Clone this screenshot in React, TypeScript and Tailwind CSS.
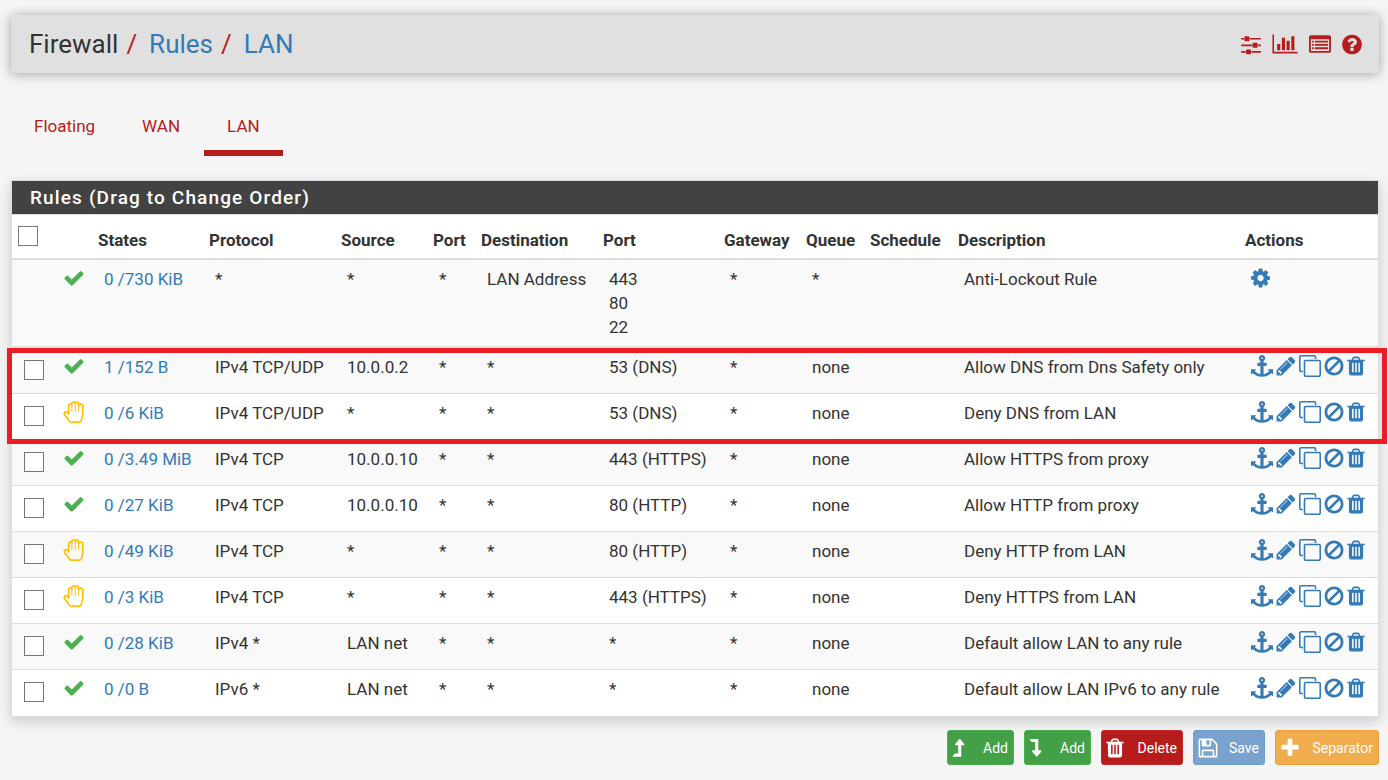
import type { ReactNode } from 'react'

type Status = 'pass' | 'block'

interface Rule {
  status: Status
  states: string
  protocol: string
  source: string
  port: string
  description: string
}

const RULES: Rule[] = [
  { status: 'pass',  states: '1 /152 B',    protocol: 'IPv4 TCP/UDP', source: '10.0.0.2',  port: '53 (DNS)',    description: 'Allow DNS from Dns Safety only' },
  { status: 'block', states: '0 /6 KiB',    protocol: 'IPv4 TCP/UDP', source: '*',         port: '53 (DNS)',    description: 'Deny DNS from LAN' },
  { status: 'pass',  states: '0 /3.49 MiB', protocol: 'IPv4 TCP',     source: '10.0.0.10', port: '443 (HTTPS)', description: 'Allow HTTPS from proxy' },
  { status: 'pass',  states: '0 /27 KiB',   protocol: 'IPv4 TCP',     source: '10.0.0.10', port: '80 (HTTP)',   description: 'Allow HTTP from proxy' },
  { status: 'block', states: '0 /49 KiB',   protocol: 'IPv4 TCP',     source: '*',         port: '80 (HTTP)',   description: 'Deny HTTP from LAN' },
  { status: 'block', states: '0 /3 KiB',    protocol: 'IPv4 TCP',     source: '*',         port: '443 (HTTPS)', description: 'Deny HTTPS from LAN' },
  { status: 'pass',  states: '0 /28 KiB',   protocol: 'IPv4 *',       source: 'LAN net',   port: '*',           description: 'Default allow LAN to any rule' },
  { status: 'pass',  states: '0 /0 B',      protocol: 'IPv6 *',       source: 'LAN net',   port: '*',           description: 'Default allow LAN IPv6 to any rule' },
]

const TABS = ['Floating', 'WAN', 'LAN']

const COLUMNS = ['States', 'Protocol', 'Source', 'Port', 'Destination', 'Port', 'Gateway', 'Queue', 'Schedule', 'Description', 'Actions']

// 1792-unit icon outlines
const PATHS = {
  check: 'M1671 566q0 40-28 68l-724 724-136 136q-28 28-68 28t-68-28l-136-136-362-362q-28-28-28-68t28-68l136-136q28-28 68-28t68 28l294 295 656-657q28-28 68-28t68 28l136 136q28 28 28 68z',
  cog: 'M1152 896q0-106-75-181t-181-75-181 75-75 181 75 181 181 75 181-75 75-181zm512-109v222q0 12-8 23t-20 13l-185 28q-19 54-39 91 35 50 107 138 10 12 10 25t-9 23q-27 37-99 108t-94 71q-12 0-26-9l-138-108q-44 23-91 38-16 136-29 186-7 28-36 28h-222q-14 0-24.5-8.5t-11.5-21.5l-28-184q-49-16-90-37l-141 107q-10 9-25 9-14 0-25-11-126-114-165-168-7-10-7-23 0-12 8-23 15-21 51-66.5t54-70.5q-27-50-41-99l-183-27q-13-2-21-12.5t-8-23.5v-222q0-12 8-23t19-13l186-28q14-46 39-92-40-57-107-138-10-12-10-24 0-10 9-23 26-36 98.5-107.5t94.5-71.5q13 0 26 10l138 107q44-23 91-38 16-136 29-186 7-28 36-28h222q14 0 24.5 8.5t11.5 21.5l28 184q49 16 90 37l142-107q9-9 24-9 13 0 25 10 129 119 165 170 7 8 7 22 0 12-8 23-15 21-51 66.5t-54 70.5q26 50 41 98l183 28q13 2 21 12.5t8 23.5z',
  anchor: 'M960 256q0-26-19-45t-45-19-45 19-19 45 19 45 45 19 45-19 19-45zm832 928v352q0 22-20 30-8 2-12 2-12 0-23-9l-93-93q-119 143-318.5 226.5t-429.5 83.5-429.5-83.5-318.5-226.5l-93 93q-9 9-23 9-4 0-12-2-20-8-20-30v-352q0-14 9-23t23-9h352q22 0 30 20 8 19-7 35l-100 100q67 91 189.5 153.5t271.5 82.5v-647h-192q-26 0-45-19t-19-45v-128q0-26 19-45t45-19h192v-163q-58-34-93-92.5t-35-128.5q0-106 75-181t181-75 181 75 75 181q0 70-35 128.5t-93 92.5v163h192q26 0 45 19t19 45v128q0 26-19 45t-45 19h-192v647q149-20 271.5-82.5t189.5-153.5l-100-100q-15-16-7-35 8-20 30-20h352q14 0 23 9t9 23z',
  pencil: 'M491 1536l91-91-235-235-91 91v107h128v128h107zm523-928q0-22-22-22-10 0-17 7l-542 542q-7 7-7 17 0 22 22 22 10 0 17-7l542-542q7-7 7-17zm-54-192l416 416-832 832h-416v-416zm683 96q0 53-37 90l-166 166-416-416 166-165q36-38 90-38 53 0 91 38l235 234q37 39 37 91z',
  clone: 'M1664 1632v-1088q0-13-9.5-22.5t-22.5-9.5h-1088q-13 0-22.5 9.5t-9.5 22.5v1088q0 13 9.5 22.5t22.5 9.5h1088q13 0 22.5-9.5t9.5-22.5zm128-1088v1088q0 66-47 113t-113 47h-1088q-66 0-113-47t-47-113v-1088q0-66 47-113t113-47h1088q66 0 113 47t47 113zm-384-384v160h-128v-160q0-13-9.5-22.5t-22.5-9.5h-1088q-13 0-22.5 9.5t-9.5 22.5v1088q0 13 9.5 22.5t22.5 9.5h160v128h-160q-66 0-113-47t-47-113v-1088q0-66 47-113t113-47h1088q66 0 113 47t47 113z',
  ban: 'M1440 893q0-161-87-295l-754 753q137 89 297 89 111 0 211.5-43.5t173.5-116.5 116-174.5 43-212.5zm-999 299l755-754q-135-91-300-91-148 0-273 73t-198 199-73 274q0 162 89 299zm1223-299q0 157-61 300t-163.5 246-245 164-298.5 61-298.5-61-245-164-163.5-246-61-300 61-299.5 163.5-245.5 245-164 298.5-61 298.5 61 245 164 163.5 245.5 61 299.5z',
  trash: 'M704 1376v-704q0-14-9-23t-23-9h-64q-14 0-23 9t-9 23v704q0 14 9 23t23 9h64q14 0 23-9t9-23zm256 0v-704q0-14-9-23t-23-9h-64q-14 0-23 9t-9 23v704q0 14 9 23t23 9h64q14 0 23-9t9-23zm256 0v-704q0-14-9-23t-23-9h-64q-14 0-23 9t-9 23v704q0 14 9 23t23 9h64q14 0 23-9t9-23zm-544-992h448l-48-117q-7-9-17-11h-317q-10 2-17 11zm928 32v64q0 14-9 23t-23 9h-96v948q0 83-47 143.5t-113 60.5h-832q-66 0-113-58.5t-47-141.5v-952h-96q-14 0-23-9t-9-23v-64q0-14 9-23t23-9h309l70-167q15-37 54-63t79-26h320q40 0 79 26t54 63l70 167h309q14 0 23 9t9 23z',
  save: 'M512 1536h768v-384h-768v384zm896 0h128v-896q0-14-10-38.5t-20-34.5l-281-281q-10-10-34-20t-39-10v416q0 40-28 68t-68 28h-576q-40 0-68-28t-28-68v-416h-128v1280h128v-416q0-40 28-68t68-28h832q40 0 68 28t28 68v416zm-384-928v-320q0-13-9.5-22.5t-22.5-9.5h-192q-13 0-22.5 9.5t-9.5 22.5v320q0 13 9.5 22.5t22.5 9.5h192q13 0 22.5-9.5t9.5-22.5zm640 32v928q0 40-28 68t-68 28h-1344q-40 0-68-28t-28-68v-1344q0-40 28-68t68-28h928q40 0 88 20t76 48l280 280q28 28 48 76t20 88z',
  plus: 'M1600 736v192q0 40-28 68t-68 28h-416v416q0 40-28 68t-68 28h-192q-40 0-68-28t-28-68v-416h-416q-40 0-68-28t-28-68v-192q0-40 28-68t68-28h416v-416q0-40 28-68t68-28h192q40 0 68 28t28 68v416h416q40 0 68 28t28 68z',
  sliders: 'M480 1408v128h-352v-128h352zm352-128q26 0 45 19t19 45v256q0 26-19 45t-45 19h-256q-26 0-45-19t-19-45v-256q0-26 19-45t45-19h256zm160-384v128h-864v-128h864zm-640-512v128h-224v-128h224zm1312 1024v128h-736v-128h736zm-960-1152q26 0 45 19t19 45v256q0 26-19 45t-45 19h-256q-26 0-45-19t-19-45v-256q0-26 19-45t45-19h256zm640 512q26 0 45 19t19 45v256q0 26-19 45t-45 19h-256q-26 0-45-19t-19-45v-256q0-26 19-45t45-19h256zm320 128v128h-224v-128h224zm0-512v128h-864v-128h864z',
  chart: 'M640 896v512h-256v-512h256zm384-512v1024h-256v-1024h256zm1024 1152v128h-2048v-1536h128v1408h1920zm-640-896v768h-256v-768h256zm384-384v1152h-256v-1152h256z',
  help: 'M1024 1376v-192q0-14-9-23t-23-9h-192q-14 0-23 9t-9 23v192q0 14 9 23t23 9h192q14 0 23-9t9-23zm256-672q0-88-55.5-163t-138.5-116-170-41q-243 0-371 213-15 24 8 42l132 100q7 6 19 6 16 0 25-12 53-68 86-92 34-24 86-24 48 0 85.5 26t37.5 59q0 38-20 61t-68 45q-63 28-115.5 86.5t-52.5 125.5v36q0 14 9 23t23 9h192q14 0 23-9t9-23q0-19 21.5-49.5t54.5-49.5q32-18 49-28.5t46-35 44.5-48 28-60.5 12.5-81zm384 192q0 209-103 385.5t-279.5 279.5-385.5 103-385.5-103-279.5-279.5-103-385.5 103-385.5 279.5-279.5 385.5-103 385.5 103 279.5 279.5 103 385.5z',
  list: 'M160 128h1600q66 0 113 47t47 113v1216q0 66-47 113t-113 47h-1600q-66 0-113-47t-47-113v-1216q0-66 47-113t113-47zM160 480v992q0 32 32 32h1536q32 0 32-32v-992zM272 608h150v160h-150zM512 608h1152v160h-1152zM272 896h150v160h-150zM512 896h1152v160h-1152zM272 1184h150v160h-150zM512 1184h1152v160h-1152z',
  up: 'M448 1600q-24 0-32-18t4-34l160-192q9-12 25-12h259v-672h-192q-40 0-58-37t9-68l320-384q18-22 49-22t49 22l320 384q27 32 9 69t-58 36h-192v896q0 32-32 32z',
  down: 'M448 160q-24 0-32 18t4 34l160 192q9 12 25 12h259v672h-192q-40 0-58 37t9 68l320 384q18 22 49 22t49-22l320-384q27-32 9-69t-58-36h-192v-896q0-32-32-32z',
}

function Icon({ name, viewBox = '0 0 1792 1792', className = 'size-[22px]' }: { name: keyof typeof PATHS; viewBox?: string; className?: string }) {
  return (
    <svg viewBox={viewBox} className={`block shrink-0 ${className}`} fill="currentColor" fillRule="evenodd" aria-hidden="true">
      <path d={PATHS[name]} />
    </svg>
  )
}

function HandIcon() {
  return (
    <svg viewBox="0 0 22 22" className="-ml-px block size-[22px] text-[#ffc107]" fill="none" stroke="currentColor" strokeWidth="1.7" strokeLinecap="round" strokeLinejoin="round" aria-hidden="true">
      <path d="M5.700 12.800V4.600a1.700 1.700 0 0 1 3.200-.8V2.700a1.700 1.700 0 0 1 3.400-.2a1.700 1.700 0 0 1 3.300 1v1.300a1.900 1.900 0 0 1 4.200.9v7.500c0 3-1.300 4.300-1.500 6.200-.1 1-.7 1.700-1.700 1.700H8.400c-.9 0-1.500-.4-2-1.100L2 14.200c-1-1.300-.9-2.700.1-3.300 1.200-.7 2.300-.2 3.600 1.900z" />
      <path d="M8.900 4v6.500M12.300 3v7.500M15.600 4.800v5.700" strokeWidth="1" />
    </svg>
  )
}

function StatusIcon({ status }: { status: Status }) {
  return status === 'pass' ? <Icon name="check" className="-ml-px size-[22px] text-[#4caf50]" /> : <HandIcon />
}

function IconLink({ label, children }: { label: string; children: ReactNode }) {
  return <a href="#" aria-label={label}>{children}</a>
}

function Th({ children }: { children?: ReactNode }) {
  return <th scope="col" className="h-[43px] px-[6px] pt-[6px] text-left align-middle font-bold whitespace-nowrap">{children}</th>
}

function Td({ children }: { children?: ReactNode }) {
  return <td className="border-t border-[#ddd] py-[7px] pl-3 align-top whitespace-nowrap group-first:border-t-2">{children}</td>
}

function Check({ label }: { label: string }) {
  return <input type="checkbox" aria-label={label} className="block size-5 appearance-none border border-[#767676] bg-white checked:bg-[#337ab7]" />
}

function RuleRow({ rule }: { rule: Rule }) {
  return (
    <tr className="group h-[46px] first:h-[47px] last:h-[47px] odd:bg-[#f9f9f9]">
      <Td><div className="pt-[5px]"><Check label={`Select ${rule.description}`} /></div></Td>
      <Td><StatusIcon status={rule.status} /></Td>
      <Td><a href="#" className="text-[#337ab7]">{rule.states}</a></Td>
      <Td>{rule.protocol}</Td>
      <Td>{rule.source}</Td>
      <Td>*</Td>
      <Td>*</Td>
      <Td>{rule.port}</Td>
      <Td>*</Td>
      <Td>none</Td>
      <Td />
      <Td>{rule.description}</Td>
      <Td>
        <div className="flex gap-[2px] text-[#337ab7]">
          <IconLink label="Move"><Icon name="anchor" /></IconLink>
          <IconLink label="Edit"><Icon name="pencil" /></IconLink>
          <IconLink label="Copy"><Icon name="clone" /></IconLink>
          <IconLink label="Disable"><Icon name="ban" /></IconLink>
          <IconLink label="Delete"><Icon name="trash" viewBox="192 0 1408 1792" className="h-[22px] w-[18px]" /></IconLink>
        </div>
      </Td>
    </tr>
  )
}

function ActionButton({ icon, label, className, children }: { icon?: keyof typeof PATHS; label: string; className: string; children?: ReactNode }) {
  return (
    <button type="button" className={`flex h-[35px] items-center justify-between rounded-[3px] border pr-[5px] text-[14px] text-white ${className}`}>
      {icon ? <Icon name={icon} /> : children}
      {label}
    </button>
  )
}

export default function App() {
  return (
    <div className="min-h-screen bg-[#f5f5f5] pt-[15px] pr-[9px] pb-[15px] pl-[11px] font-[Roboto,sans-serif] text-[17px] leading-6 text-[#333]">
      {/* Breadcrumb bar */}
      <header className="flex h-[58px] items-center justify-between rounded-[3px] bg-[#e0e0e0] pr-[17px] pl-[18px] shadow-[0_1px_12px_rgba(0,0,0,0.35)]">
        <nav aria-label="Breadcrumb" className="flex text-[26px] leading-8">
          <span>Firewall</span>
          <span className="px-2 text-[#b71c1c]">/</span>
          <a href="#" className="pl-1 text-[#337ab7]">Rules</a>
          <span className="px-2 text-[#b71c1c]">/</span>
          <a href="#" className="pl-1 text-[#337ab7]">LAN</a>
        </nav>
        <div className="flex items-center gap-[11px] text-[#b71c1c]">
          <IconLink label="Advanced settings"><Icon name="sliders" viewBox="128 0 1536 1792" className="h-[23px] w-5" /></IconLink>
          <IconLink label="Statistics"><Icon name="chart" viewBox="0 0 2048 1792" className="h-[22px] w-[26px]" /></IconLink>
          <IconLink label="Logs"><Icon name="list" viewBox="0 0 1920 1792" className="h-[22px] w-[22px]" /></IconLink>
          <IconLink label="Help"><Icon name="help" viewBox="128 0 1536 1792" className="h-[23px] w-5" /></IconLink>
        </div>
      </header>

      {/* Interface tabs */}
      <nav aria-label="Interfaces" className="mt-[27px] flex gap-px">
        {TABS.map(tab => (
          <a
            key={tab}
            href="#"
            className={`border-b-[6px] px-[23px] pt-[14px] pb-3 text-[#b71c1c] ${tab === 'LAN' ? 'border-[#b71c1c]' : 'border-transparent'}`}
          >
            {tab}
          </a>
        ))}
      </nav>

      {/* Rules panel */}
      <section className="relative mt-6 border border-[#ddd] bg-white shadow-[0_4px_12px_rgba(0,0,0,0.18)]">
        <h2 className="h-[34px] border-b border-[#ddd] bg-[#424242] pl-[18px] text-[19px] leading-[33px] font-medium tracking-[0.06em] text-white">
          Rules (Drag to Change Order)
        </h2>
        <table className="w-full table-fixed border-separate border-spacing-0">
          <colgroup>
            <col className="w-[40px]" />
            <col className="w-[40px]" />
            <col className="w-[111px]" />
            <col className="w-[132px]" />
            <col className="w-[92px]" />
            <col className="w-[48px]" />
            <col className="w-[122px]" />
            <col className="w-[121px]" />
            <col className="w-[82px]" />
            <col className="w-[64px]" />
            <col className="w-[88px]" />
            <col />
            <col className="w-[139px]" />
          </colgroup>
          <thead>
            <tr>
              <th className="px-[6px] pt-[11px] align-top"><Check label="Select all rules" /></th>
              <Th />
              {COLUMNS.map((col, i) => (
                <Th key={i}>{col}</Th>
              ))}
            </tr>
          </thead>
          <tbody>
            <tr className="group odd:bg-[#f9f9f9]">
              <Td />
              <Td><StatusIcon status="pass" /></Td>
              <Td><a href="#" className="text-[#337ab7]">0 /730 KiB</a></Td>
              <Td>*</Td>
              <Td>*</Td>
              <Td>*</Td>
              <Td>LAN Address</Td>
              <Td>443<br />80<br />22</Td>
              <Td>*</Td>
              <Td>*</Td>
              <Td />
              <Td>Anti-Lockout Rule</Td>
              <Td><div className="flex text-[#337ab7]"><IconLink label="Settings"><Icon name="cog" viewBox="128 0 1536 1792" className="h-[22px] w-[19px]" /></IconLink></div></Td>
            </tr>
          </tbody>
          <tbody>
            {RULES.map(rule => (
              <RuleRow key={rule.description} rule={rule} />
            ))}
          </tbody>
        </table>
        {/* Marker around the two DNS rules */}
        <div className="pointer-events-none absolute top-[167px] -right-[9px] -left-[5px] h-24 border-5 border-[#ed1c24]" />
      </section>

      {/* Actions */}
      <div className="mt-[13px] flex justify-end gap-[10px]">
        <ActionButton label="Add" className="w-[67px] border-[#4caf50] bg-[#43a047] pl-1">
          <Icon name="up" viewBox="384 0 1100 1792" className="h-[22px] w-[14px]" />
        </ActionButton>
        <ActionButton label="Add" className="w-[67px] border-[#4caf50] bg-[#43a047] pl-1">
          <Icon name="down" viewBox="384 0 1100 1792" className="h-[22px] w-[14px]" />
        </ActionButton>
        <ActionButton icon="trash" label="Delete" className="w-[82px] border-[#c62828] bg-[#b71c1c] pl-[2px]" />
        <ActionButton icon="save" label="Save" className="w-[72px] border-[#6d9dcb] bg-[#79a3ce] pl-[3px]" />
        <ActionButton icon="plus" label="Separator" className="w-[104px] border-[#eea236] bg-[#f0ad4e] pl-[3px]" />
      </div>
    </div>
  )
}
